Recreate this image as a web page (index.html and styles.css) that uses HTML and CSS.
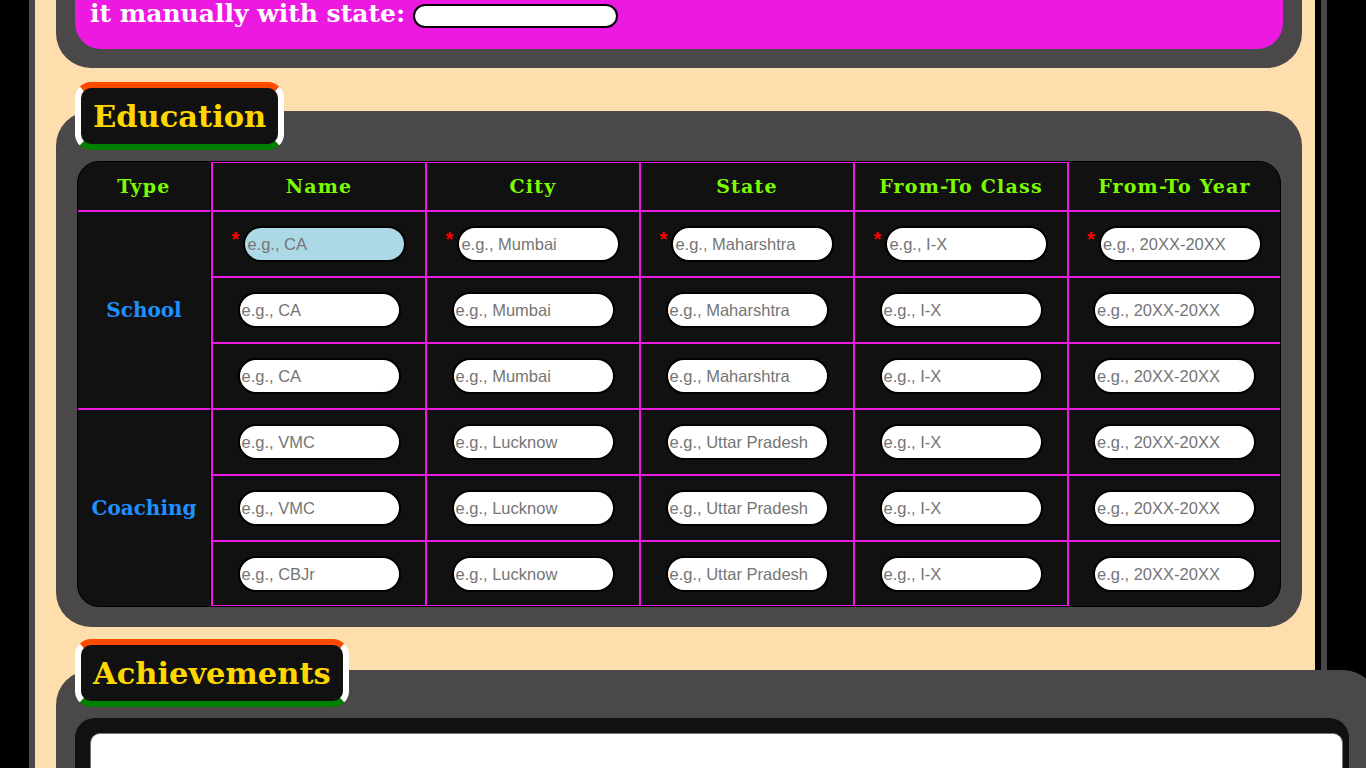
FILE: index.html
```html
<!DOCTYPE html>
<html lang="en">
<head>
<meta charset="utf-8">
<title>Education</title>
<link rel="stylesheet" href="styles.css">
</head>
<body>
<div class="frame">
  <div class="paper">
    <section class="panel panel-intro">
      <div class="intro-box">
        <p class="intro-line">it manually with state: <input class="state-input" type="text"></p>
      </div>
    </section>

    <div class="group">
      <h2 class="badge">Education</h2>
      <section class="panel panel-edu">
        <div class="table-wrap">
          <table class="edu">
            <thead>
              <tr class="head">
                <th class="c-type">Type</th>
                <th class="c-col top-hl">Name</th>
                <th class="c-col top-hl">City</th>
                <th class="c-col top-hl">State</th>
                <th class="c-col top-hl">From-To Class</th>
                <th class="c-last">From-To Year</th>
              </tr>
            </thead>
            <tbody>
              <tr class="row">
                <td class="type" rowspan="3">School</td>
                <td><span class="req">*</span><input class="field focus" type="text" placeholder="e.g., CA"></td>
                <td><span class="req">*</span><input class="field" type="text" placeholder="e.g., Mumbai"></td>
                <td><span class="req">*</span><input class="field" type="text" placeholder="e.g., Maharshtra"></td>
                <td><span class="req">*</span><input class="field" type="text" placeholder="e.g., I-X"></td>
                <td><span class="req">*</span><input class="field" type="text" placeholder="e.g., 20XX-20XX"></td>
              </tr>
              <tr class="row">
                <td><input class="field" type="text" placeholder="e.g., CA"></td>
                <td><input class="field" type="text" placeholder="e.g., Mumbai"></td>
                <td><input class="field" type="text" placeholder="e.g., Maharshtra"></td>
                <td><input class="field" type="text" placeholder="e.g., I-X"></td>
                <td><input class="field" type="text" placeholder="e.g., 20XX-20XX"></td>
              </tr>
              <tr class="row">
                <td><input class="field" type="text" placeholder="e.g., CA"></td>
                <td><input class="field" type="text" placeholder="e.g., Mumbai"></td>
                <td><input class="field" type="text" placeholder="e.g., Maharshtra"></td>
                <td><input class="field" type="text" placeholder="e.g., I-X"></td>
                <td><input class="field" type="text" placeholder="e.g., 20XX-20XX"></td>
              </tr>
              <tr class="row">
                <td class="type" rowspan="3">Coaching</td>
                <td><input class="field" type="text" placeholder="e.g., VMC"></td>
                <td><input class="field" type="text" placeholder="e.g., Lucknow"></td>
                <td><input class="field" type="text" placeholder="e.g., Uttar Pradesh"></td>
                <td><input class="field" type="text" placeholder="e.g., I-X"></td>
                <td><input class="field" type="text" placeholder="e.g., 20XX-20XX"></td>
              </tr>
              <tr class="row">
                <td><input class="field" type="text" placeholder="e.g., VMC"></td>
                <td><input class="field" type="text" placeholder="e.g., Lucknow"></td>
                <td><input class="field" type="text" placeholder="e.g., Uttar Pradesh"></td>
                <td><input class="field" type="text" placeholder="e.g., I-X"></td>
                <td><input class="field" type="text" placeholder="e.g., 20XX-20XX"></td>
              </tr>
              <tr class="row last-row">
                <td class="bot-hl"><input class="field" type="text" placeholder="e.g., CBJr"></td>
                <td class="bot-hl"><input class="field" type="text" placeholder="e.g., Lucknow"></td>
                <td class="bot-hl"><input class="field" type="text" placeholder="e.g., Uttar Pradesh"></td>
                <td class="bot-hl"><input class="field" type="text" placeholder="e.g., I-X"></td>
                <td><input class="field" type="text" placeholder="e.g., 20XX-20XX"></td>
              </tr>
            </tbody>
          </table>
        </div>
      </section>
    </div>

    <div class="group group-ach">
      <h2 class="badge">Achievements</h2>
      <section class="panel panel-ach">
        <div class="ach-box">
          <textarea class="ach-text"></textarea>
        </div>
      </section>
    </div>
  </div>
</div>
</body>
</html>
```

FILE: styles.css
```css
html, body {
  margin: 0;
  padding: 0;
}

body {
  background: #000;
  font-family: "DejaVu Serif", serif;
}

.frame {
  margin-left: 29px;
  width: 1298px;
  box-sizing: border-box;
  border-left: 6px solid #4a4849;
  border-right: 6px solid #4a4849;
}

.paper {
  background: #ffdead;
  border-right: 6px solid #000;
  padding: 0 13px 40px 21px;
}

.panel {
  background: #4a4849;
  border-radius: 35px;
  box-sizing: border-box;
}

/* intro (cut-off) panel */
.panel-intro {
  width: 1246px;
  border-radius: 0 0 35px 35px;
  padding: 0 19px 19px;
}

.intro-box {
  background: #ec19e1;
  border-radius: 0 0 26px 26px;
  padding: 0 15px 21px;
}

.intro-line {
  margin: 0;
  color: #fff;
  font: bold 25px "DejaVu Serif", serif;
  line-height: 28px;
  white-space: nowrap;
}

.state-input {
  width: 205px;
  height: 24px;
  box-sizing: border-box;
  border: 2px solid #000;
  border-radius: 12px;
  background: #fff;
  vertical-align: middle;
  margin: 0 0 0 -1px;
  padding: 0 6px;
}

/* section groups with badges */
.group {
  margin-top: 14px;
}

.group-ach {
  margin-top: 12px;
}

.badge {
  position: relative;
  z-index: 1;
  width: fit-content;
  margin: 0 0 -39px 19px;
  height: 68px;
  box-sizing: border-box;
  border-style: solid;
  border-width: 6px;
  border-color: #ff4a00 #fff #008000 #fff;
  border-radius: 16px;
  background: #111;
  color: #ffd700;
  font: bold 30.5px "DejaVu Serif", serif;
  line-height: 56px;
  padding: 0 12px;
  white-space: nowrap;
}

.group-ach .badge {
  margin-bottom: -37px;
}

.panel-edu {
  width: 1246px;
  padding: 50px 21px 20px;
}

.table-wrap {
  width: 1204px;
  box-sizing: border-box;
  border: 1px solid #000;
  border-radius: 22px;
  overflow: hidden;
  background: #111;
}

.edu {
  width: 1202px;
  table-layout: fixed;
  border-collapse: separate;
  border-spacing: 0;
}

.edu th,
.edu td {
  box-sizing: border-box;
  padding: 0;
  text-align: center;
  vertical-align: middle;
}

.edu tr.head {
  height: 48px;
}

.edu tr.row {
  height: 66px;
}

.edu th {
  color: #7cfc00;
  font: bold 19px "DejaVu Serif", serif;
  letter-spacing: 1.2px;
}

.edu th.c-type {
  width: 133px;
  border-right: 1px solid #000;
}

.edu th.c-col {
  width: 214px;
  border-left: 2px solid #ed19e2;
}

.edu th.c-last {
  width: 213px;
  border-left: 2px solid #ed19e2;
}

.edu th.top-hl {
  box-shadow: inset 0 1px 0 #ed19e2;
}

.edu td {
  border-top: 2px solid #ed19e2;
  border-left: 2px solid #ed19e2;
}

.edu td.type {
  border-left: 0;
  border-right: 1px solid #000;
  color: #1e90ff;
  font: bold 20px "DejaVu Serif", serif;
  letter-spacing: 0;
}

.edu td.bot-hl {
  box-shadow: inset 0 -1px 0 #ed19e2;
}

.req {
  color: #f00;
  font: bold 20px "Liberation Sans", Arial, sans-serif;
  margin-right: 4px;
  vertical-align: 3px;
}

.field {
  width: 163px;
  height: 36px;
  box-sizing: border-box;
  margin: 0;
  border: 2px solid #000;
  border-radius: 18px;
  background: #fff;
  padding: 0 2px;
  font: 16.5px "Liberation Sans", Arial, sans-serif;
  color: #000;
  vertical-align: middle;
  outline: none;
}

.field.focus {
  background: #add8e6;
}

.field::placeholder {
  color: #757575;
}

/* achievements */
.panel-ach {
  width: 1322px;
  padding: 48px 19px 20px;
}

.ach-box {
  width: 1274px;
  box-sizing: border-box;
  background: #111;
  border-radius: 20px;
  padding: 15px 0 15px 15px;
}

.ach-text {
  display: block;
  width: 1253px;
  height: 110px;
  box-sizing: border-box;
  margin: 0;
  border: 1px solid #777;
  border-radius: 10px;
  background: #fff;
  resize: none;
  font: 16px "Liberation Sans", Arial, sans-serif;
}
```
